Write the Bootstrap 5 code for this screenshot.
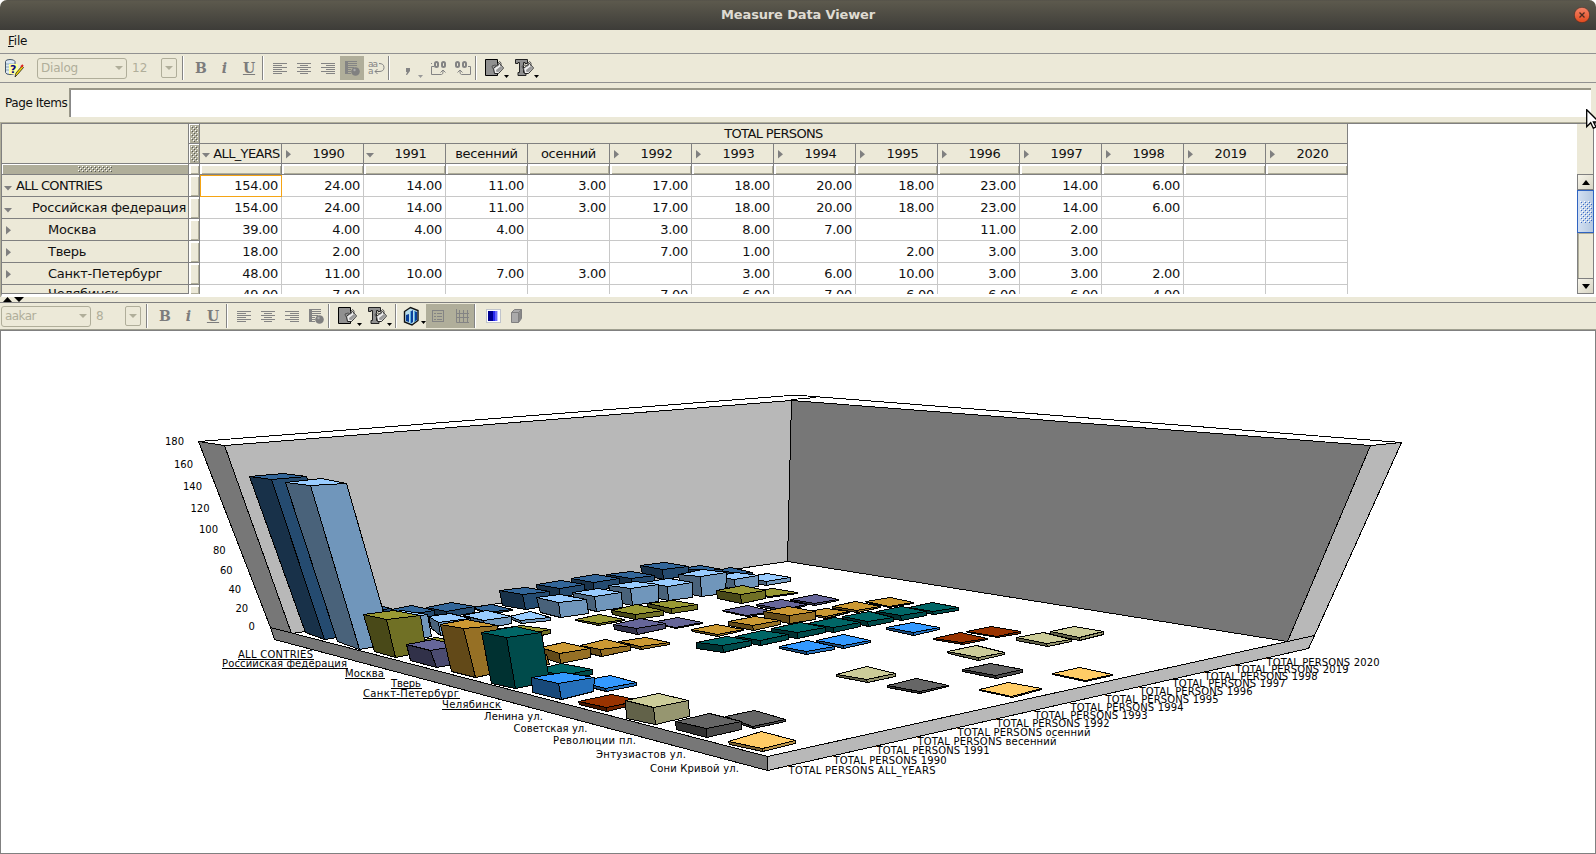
<!DOCTYPE html>
<html lang="en">
<head>
<meta charset="utf-8">
<title>Measure Data Viewer</title>
<link href="https://cdn.jsdelivr.net/npm/bootstrap@5.3.0/dist/css/bootstrap.min.css" rel="stylesheet">
<style>
:root{--face:#ece9d8;--shade:#b0ae9a;--line:#808080}
html,body{height:100%;overflow:hidden}
body{font:12px/1 "DejaVu Sans",sans-serif;color:#111;background:#fff}
.window{width:1596px;height:854px;background:var(--face);border-radius:7px 7px 0 0;overflow:hidden}
.titlebar{height:30px;background:linear-gradient(#55524a 0,#5c594d 5%,#3d3c38 100%);color:#dfdbd2;font-weight:700;font-size:13px;letter-spacing:-.15px;padding-bottom:1px}
.close-btn{right:6px;top:7px;width:16px;height:16px}
.menu{height:24px;border-bottom:1px solid #919191;padding:0 0 2px 8px;letter-spacing:-.2px}
.tools{display:grid;align-items:center;color:#7c7c7c}
.tools-a{height:29px;border-bottom:1px solid #919191;grid-template-columns:37px 90px 34px 16px 12px 24px 23px 26px 2px 28px 24px 24px 24px 24px 2px 37px 24px 24px 2px 34px 30px}
.tools-b{height:28px;border-top:1px solid var(--line);border-bottom:1px solid #a0a090;padding-left:1px;grid-template-columns:90px 34px 16px 12px 24px 23px 26px 2px 28px 24px 24px 24px 2px 34px 30px 4px 28px 24px 24px 2px 29px 24px}
.tools>*{display:flex;justify-content:flex-end;align-items:center;height:24px}
.tools svg{display:block;flex:none}
.tools .sep{width:2px;background:linear-gradient(90deg,#848484 50%,#fff 50%);justify-self:center}
.tools .combo{height:21px;border:1px solid var(--shade);border-radius:3px;color:var(--shade);justify-content:space-between;padding:0 3px 0 3px;letter-spacing:-.2px}
.tools-b .combo{letter-spacing:-.6px}
.tools .sz{color:var(--shade);justify-content:flex-start;padding-left:5px}
.tools .drop{height:20px;border:1px solid var(--shade);border-radius:2px;justify-content:center}
.tools .on{background:var(--shade)}
.tools .ser{font:700 14px/24px "DejaVu Serif",serif;justify-content:center}
.page-items{height:39px;padding:5px 5px 0 5px;letter-spacing:-.42px;white-space:nowrap}
.page-label{width:64px;padding-top:9px}
.page-box{height:29px;border:solid;border-width:2px 0 0 1px;border-color:#999788 #fff #fff #999788;background:#fff;box-shadow:inset 1px 0 #888}
.grid-pane{height:175px;background:#fff;border-top:1px solid #b0ae9a;border-left:1px solid #b0ae9a}
.grid-wrap{height:174px;border-top:1px solid var(--line);border-left:1px solid var(--line);border-bottom:3px solid #fff}
.cube{display:grid;grid-template-columns:187px 11px repeat(14,82px);grid-template-rows:20px 20px 11px repeat(5,22px) 9px;height:170px;width:1346px;overflow:hidden;font-size:13px;letter-spacing:-.27px}
.cube>div{border-right:1px solid #c8c8c8;border-bottom:1px solid #c8c8c8;position:relative;white-space:nowrap;overflow:hidden;line-height:21px}
.cube>.h{background:var(--face);border-color:var(--line);text-align:center;line-height:19px}
.cube>.r{text-align:left;line-height:21px}
.cube>.caps{letter-spacing:-.65px}
.cube>.h svg{position:absolute}
.cube>.n{text-align:right;padding-right:3px}
.cube>.last{border-bottom:0;line-height:19px}
.cube>.r.last{border-bottom:1px solid var(--line);line-height:17px}
.cube>.sel{outline:1px solid #f5a414;outline-offset:-1px}
.cube>.raise{box-shadow:inset 2px 2px #fff,inset -1px -1px #b0ae9a}
.cube>.grip{background:#b0ae9a;box-shadow:inset 1px 1px #fff}
.vcol{width:17px;margin-right:2px;height:170px;background:var(--face);border-right:1px solid var(--line)}
.vtop{height:50px}
.sbtn{height:16px;border:1px solid var(--line);border-right:0;background:linear-gradient(135deg,#f6f4ea,#d8d5c4)}
.thumb{height:43px;border:1px solid #2f63c0;background:linear-gradient(90deg,#d3e0f2,#b5c8e0);margin-right:-1px}
.track{border-left:1px solid var(--line);box-shadow:inset 1px 1px #b0ae9a}
.splitter{height:5px}
.chart-pane{height:524px;background:#fff;border:1px solid var(--line);overflow:hidden}
.chart-pane text{font:10px "DejaVu Sans",sans-serif;fill:#000}
.pointer{left:1586px;top:109px}
</style>
</head>
<body>
<svg width="0" height="0" class="position-absolute">
  <defs>
    <pattern id="dots" width="4" height="4" patternUnits="userSpaceOnUse"><rect width="1" height="1" fill="#fff"/><rect x="2" y="2" width="1" height="1" fill="#fff"/><rect x="1" y="1" width="1" height="1" fill="#555"/><rect x="3" y="3" width="1" height="1" fill="#555"/></pattern>
    <pattern id="bdots" width="4" height="4" patternUnits="userSpaceOnUse"><rect width="1" height="1" fill="#fff"/><rect x="2" y="2" width="1" height="1" fill="#fff"/><rect x="1" y="1" width="1" height="1" fill="#3a6bc8"/><rect x="3" y="3" width="1" height="1" fill="#3a6bc8"/></pattern>
    <g id="al-l" fill="#848484"><path d="M5 7h14v1H5zM5 9h9v1H5zM5 11h14v1H5zM5 13h9v1H5zM5 15h14v1H5zM5 17h9v1H5z"/></g>
    <g id="al-c" fill="#848484"><path d="M5 7h14v1H5zM8 9h8v1H8zM5 11h14v1H5zM8 13h8v1H8zM5 15h14v1H5zM8 17h8v1H8z"/></g>
    <g id="al-r" fill="#848484"><path d="M5 7h14v1H5zM10 9h9v1h-9zM5 11h14v1H5zM10 13h9v1h-9zM5 15h14v1H5zM10 17h9v1h-9z"/></g>
    <g id="al-img"><path fill="#848484" d="M5 5h12v1H5zM5 7h12v1H5zM5 9h12v1H5zM5 11h9v1H5zM5 13h6v1H5zM5 15h6v1H5zM5 17h6v1H5zM5 5h3v13H5z"/><circle cx="15.500" cy="15.500" r="4.300" fill="#808080"/><circle cx="14.500" cy="14" r="1.200" fill="#aaa"/></g>
    <g id="bucket"><path d="M8.500 12.500l6-5 4 4.500-5 5.500h-4z" fill="#eee" stroke="#222"/><path d="M13 10V7q2-3 3 0v3M9 13q-2 0-2-3 3-2 6 0" fill="none" stroke="#555"/><path d="M11 14l5-4 1.500 2-4 4h-2z" fill="#999"/><path d="M19 19h5l-2.500 3z" fill="#000"/></g>
    <g id="fill"><path d="M.5 3.500h12v16H.5z" fill="#909090" stroke="#000"/><use href="#bucket"/></g>
    <g id="tfill"><path d="M.5 3.500h12v4h-2.500v-1H8.500v10H11v3H3v-3h1.500v-10H3v1H.5z" fill="#909090" stroke="#222"/><use href="#bucket"/></g>
  </defs>
</svg>
<div class="window d-flex flex-column">
  <header class="titlebar position-relative d-flex align-items-center justify-content-center flex-shrink-0">Measure Data Viewer
    <svg class="close-btn position-absolute" viewBox="0 0 16 16"><defs><linearGradient id="cg" x2="0" y2="1"><stop stop-color="#f4856a"/><stop offset="1" stop-color="#e0491c"/></linearGradient></defs><circle cx="8" cy="8" r="7.700" fill="url(#cg)" stroke="#3c2a24" stroke-width=".6"/><path d="M5.500 5.500l5 5M10.500 5.500l-5 5" stroke="#4a2a20" stroke-width="1.300"/></svg>
  </header>
  <nav class="menu d-flex align-items-center flex-shrink-0"><span><u>F</u>ile</span></nav>

  <div class="tools tools-a flex-shrink-0">
    <div class="justify-content-start"><svg width="28" height="24"><path d="M5.500 5.500q0-2 4.500-2t5 2v11q-1 2-5 2t-4.500-2z" fill="#dce8f4" stroke="#456"/><path d="M6 8h8M6 11h8M6 14h8" stroke="#8ab"/><rect x="9" y="8" width="9" height="10" fill="#ffffa0"/><path d="M15 21l1-4 6-7 1.500 1.500-6 7z" fill="#f4d800" stroke="#222" stroke-width=".8"/><path d="M21 11l2-2" stroke="#d22" stroke-width="2"/><text x="10" y="17" font-size="11" font-weight="700" fill="#0a0a80">?</text></svg></div>
    <div class="combo"><span>Dialog</span><svg width="8" height="4"><path d="M0 0h8L4 4z" fill="#b0ae9a"/></svg></div>
    <div class="sz">12</div>
    <div class="drop"><svg width="8" height="4"><path d="M0 0h8L4 4z" fill="#b0ae9a"/></svg></div>
    <div class="sep"></div>
    <div class="ser">B</div><div class="ser fst-italic">i</div><div class="ser text-decoration-underline">U</div>
    <div class="sep"></div>
    <div><svg width="24" height="24"><use href="#al-l"/></svg></div>
    <div><svg width="24" height="24"><use href="#al-c"/></svg></div>
    <div><svg width="24" height="24"><use href="#al-r"/></svg></div>
    <div class="on"><svg width="24" height="24"><use href="#al-img"/></svg></div>
    <div><svg width="24" height="24" fill="none" stroke="#848484"><text x="4" y="11" font-size="9" fill="#848484" stroke="none" textLength="10">aa</text><text x="4" y="18" font-size="9" fill="#848484" stroke="none">a</text><path d="M15 7.500q5 0 5 4t-5 4h-4M13.500 13l-2.500 2.500 2.500 2.500"/></svg></div>
    <div class="sep"></div>
    <div><svg width="37" height="24"><path d="M16 12h4v3l-3 4h-1l1-3h-1z" fill="#848484"/><path d="M28 19h5l-2.500 3z" fill="#999"/></svg></div>
    <div><svg width="24" height="24" fill="none" stroke="#848484"><g stroke-width="2"><rect x="8" y="6" width="3" height="5" rx="1.500"/><rect x="15" y="6" width="3" height="5" rx="1.500"/></g><path d="M7 10.500H4.500v8h10q2 0 1.500-4M13.500 16.500l2.500-2.500 2.500 2.500M4 7.500h1"/></svg></div>
    <div><svg width="24" height="24" fill="none" stroke="#848484"><g stroke-width="2"><rect x="5" y="6" width="3" height="5" rx="1.500"/><rect x="12" y="6" width="3" height="5" rx="1.500"/></g><path d="M17 10.500h2.500v8h-9q-2 0-1.500-4M6.500 16.500L9 14l2.500 2.500"/></svg></div>
    <div class="sep"></div>
    <div><svg width="26" height="24"><use href="#fill"/></svg></div>
    <div><svg width="26" height="24"><use href="#tfill"/></svg></div>
  </div>

  <div class="page-items d-flex flex-shrink-0"><div class="page-label flex-shrink-0">Page Items</div><div class="page-box flex-grow-1"></div></div>

  <section class="grid-pane flex-shrink-0"><div class="grid-wrap d-flex">
    <div class="cube flex-shrink-0" id="cube"></div>
    <div class="flex-grow-1"></div>
    <div class="vcol d-flex flex-column">
      <div class="vtop"></div>
      <div class="sbtn d-flex align-items-center justify-content-center"><svg width="8" height="5"><path d="M0 5h8L4 0z"/></svg></div>
      <div class="thumb d-flex align-items-center justify-content-center"><svg width="12" height="22"><rect width="12" height="22" fill="url(#bdots)"/></svg></div>
      <div class="track flex-grow-1"></div>
      <div class="sbtn d-flex align-items-center justify-content-center"><svg width="8" height="5"><path d="M0 0h8L4 5z"/></svg></div>
    </div>
  </div></section>

  <div class="splitter flex-shrink-0"><svg class="d-block" width="30" height="5"><path d="M3 5h9L7.500 0zM14 0h10l-5 5z"/></svg></div>

  <div class="tools tools-b flex-shrink-0">
    <div class="combo"><span>aakar</span><svg width="8" height="4"><path d="M0 0h8L4 4z" fill="#b0ae9a"/></svg></div>
    <div class="sz">8</div>
    <div class="drop"><svg width="8" height="4"><path d="M0 0h8L4 4z" fill="#b0ae9a"/></svg></div>
    <div class="sep"></div>
    <div class="ser">B</div><div class="ser fst-italic">i</div><div class="ser text-decoration-underline">U</div>
    <div class="sep"></div>
    <div><svg width="24" height="24"><use href="#al-l"/></svg></div>
    <div><svg width="24" height="24"><use href="#al-c"/></svg></div>
    <div><svg width="24" height="24"><use href="#al-r"/></svg></div>
    <div><svg width="24" height="24"><use href="#al-img"/></svg></div>
    <div class="sep"></div>
    <div><svg width="26" height="24"><use href="#fill"/></svg></div>
    <div><svg width="26" height="24"><use href="#tfill"/></svg></div>
    <div class="sep"></div>
    <div><svg width="24" height="24"><path d="M2.500 7.500l6-4 7.500 3v10l-6 4.500-7.500-3z" fill="#b8dcea" stroke="#111" stroke-width="1.400"/><path d="M4 11l3-1v8l-3-1zM8 8l3-2v12l-3 2zM12 7l3 1v8l-3 2z" fill="#0a3f9a"/><path d="M8 8l1-.6v12l-1 .6zM12 7l1 .4v10l-1 .6z" fill="#5ab0e0"/><path d="M19 17h5l-2.500 3z" fill="#000"/></svg></div>
    <div class="on"><svg width="24" height="24" fill="none" stroke="#848484"><rect x="6.500" y="6.500" width="11" height="11"/><path d="M8 9.500h2M8 12.500h2M8 15.500h2M11 9.500h5M11 12.500h5M11 15.500h5"/></svg></div>
    <div class="on"><svg width="24" height="24" fill="none" stroke="#848484"><path d="M6.500 5v13.500H19M9.500 6v12M13.500 6v12M17.500 6v12M6 9.500h13M6 13.500h13"/></svg></div>
    <div class="sep"></div>
    <div><svg width="24" height="24"><rect x="5.500" y="5.500" width="14" height="13" fill="#fff" stroke="#c0c4cc"/><path d="M7 7h5v10H7z" fill="#000090"/><path d="M12 7h2v10h-2z" fill="#2a2af0"/><path d="M14 7h2v10h-2z" fill="#6a6af8"/><path d="M16 7h1v10h-1z" fill="#c0c0ff"/></svg></div>
    <div><svg width="24" height="24"><path d="M6.500 8.500l3-3h7v9l-3 4h-7z" fill="#aaa" stroke="#808080"/><path d="M6.500 8.500h7v10M13.500 8.500l3-3" fill="none" stroke="#808080"/><path d="M14 9l2-3v9l-2 3z" fill="#888"/></svg></div>
  </div>

  <main class="chart-pane flex-shrink-0"><svg id="chart" class="d-block" width="1594" height="522" viewBox="1 331 1594 522"></svg></main>
</div>
<svg class="pointer position-absolute" width="10" height="20" viewBox="0 0 10 20"><path d="M.7.7v17l4-4 2.600 5.500 2.700-1.200-2.600-5H13z" fill="#fff" stroke="#000" stroke-width="1.300"/></svg>

<script src="https://cdn.jsdelivr.net/npm/bootstrap@5.3.0/dist/js/bootstrap.bundle.min.js"></script>
<script>
/* ---- crosstab ---- */
const down = (x, y) => `<svg width="8" height="5" style="left:${x}px;top:${y}px"><path d="M0 0h8L4 4.500z" fill="#808080"/></svg>`;
const right = (x, y) => `<svg width="5" height="9" style="left:${x}px;top:${y}px"><path d="M0 0v8.500L5 4.200z" fill="#808080"/></svg>`;
const heads = ['v ALL_YEARS','> 1990','v 1991','  весенний','  осенний','> 1992','> 1993','> 1994','> 1995','> 1996','> 1997','> 1998','> 2019','> 2020'];
const rows = [
  ['v',14,'ALL CONTRIES',[154,24,14,11,3,17,18,20,18,23,14,6]],
  ['v',30,'Российская федерация',[154,24,14,11,3,17,18,20,18,23,14,6]],
  ['>',46,'Москва',[39,4,4,4,,3,8,7,,11,2]],
  ['>',46,'Тверь',[18,2,,,,7,1,,2,3,3]],
  ['>',46,'Санкт-Петербург',[48,11,10,7,3,,3,6,10,3,3,2]],
  ['',46,'Челябинск',[49,7,,,,7,6,7,6,6,6,4]]
];
let h = `<div class="h" style="grid-row:span 2"></div><div class="h grip"><svg width="7" height="16" style="left:2px;top:2px"><rect width="7" height="16" fill="url(#dots)"/></svg></div><div class="h caps" style="grid-column:span 14">TOTAL PERSONS</div>`;
h += `<div class="h grip"><svg width="7" height="16" style="left:2px;top:2px"><rect width="7" height="16" fill="url(#dots)"/></svg></div>`;
for (const t of heads) {
  const k = t[0];
  h += `<div class="h${t[2] === 'A' ? ' caps' : ''}" style="padding-left:${k === ' ' ? 0 : 12}px">${k === 'v' ? down(2, 9) : k === '>' ? right(4, 6) : ''}${t.slice(2)}</div>`;
}
h += `<div class="h grip"><svg width="34" height="6" style="left:76px;top:2px"><rect width="34" height="6" fill="url(#dots)"/></svg></div>` + '<div class="h raise"></div>'.repeat(15);
rows.forEach(([k, pad, name, vals], i) => {
  const last = i === 5 ? ' last' : '';
  h += `<div class="h r${last}${i ? '' : ' caps'}" style="padding-left:${pad}px">${k === 'v' ? down(2, 11) : k === '>' ? right(4, 7) : ''}${name}</div><div class="h raise${last}"></div>`;
  for (let c = 0; c < 14; c++) h += `<div class="n${last}${!i && !c ? ' sel' : ''}">${vals[c] ? vals[c].toFixed(2) : ''}</div>`;
});
document.getElementById('cube').innerHTML = h;

/* ---- 3D bar chart ---- */
const palette = ['#336699','#99ccff','#999933','#666699','#cc9933','#006666','#3399ff','#993300','#cccc99','#666666','#ffcc66'];
const tone = (c, f) => '#' + [1,3,5].map(i => Math.round(parseInt(c.substr(i, 2), 16) * f).toString(16).padStart(2, '0')).join('');
const poly = (p, fill) => `<polygon points="${p.map(q => q.join(',')).join(' ')}" fill="${fill}"/>`;
const P = (a, b) => [a, b];
let s = '<g stroke="#000" stroke-width="1" stroke-linejoin="round" shape-rendering="crispEdges">';
s += poly([P(198.5,441.5),P(790,395.5),P(801,395.500),P(1401.5,442.500),P(1370.5,445.500),P(791.5,400.500),P(224.5,445.500)], '#fff');
s += poly([P(224.5,445.5),P(791.5,400.5),P(787.5,561.5),P(291.5,633.5)], '#b8b8b8');
s += poly([P(791.5,400.5),P(1370.5,445.5),P(1287.5,641.5),P(787.5,561.5)], '#777777');
s += '<path d="M791.500 399.500L816 397.500" fill="none"/>';
s += poly([P(198.5,441.5),P(224.5,445.5),P(291.5,633.5),P(270.5,627.5)], '#777777');
s += poly([P(1370.5,445.5),P(1401.5,442.5),P(1314.5,635.5),P(1287.5,641.5)], '#b8b8b8');
s += poly([P(270.5,627.5),P(767.5,756.5),P(767.5,770.5),P(274.5,639.5)], '#777777');
s += poly([P(767.5,756.5),P(1314.5,635.5),P(1308.5,648.5),P(767.5,770.5)], '#b8b8b8');

/* origins of the five drawing sheets, three sheet units to a pixel */
const O = {a:[150,380], b:[350,540], c:[480,540], d:[680,540], e:[900,560]};
/* sheet, series, left, back, right, front of the top face, then a drop or the three lower corners (left, front, right) */
const bars = [
['d',0,113,90,150,82,217,96,180,101,8],
['d',0,5,85,62,76,127,88,75,92,20],
['c',0,481,76,552,67,624,79,548,88,487,103,550,118,624,105],
['c',0,380,103,455,94,523,105,453,116,25],
['c',0,275,115,345,103,418,115,340,127,27],
['c',0,170,133,243,122,313,134,237,146,25],
['c',0,59,151,137,141,207,153,127,164,68,195,135,208,212,197],
['b',0,370,202,425,194,486,207,410,217,5],
['b',0,230,201,305,188,372,200,290,213,18],
['b',0,125,208,185,197,252,210,175,222,22],
['b',0,0,205,70,192,123,204,40,215,30],
['a',0,299,290,400,280,470,290,364,299,467,757,522,779,622,762],
['d',1,190,112,262,101,331,113,258,124,13],
['c',1,700,108,768,96,835,106,762,117,705,135,765,147,834,138],
['c',1,594,103,667,87,739,98,660,110,605,158,665,169,736,159],
['c',1,490,128,565,114,638,127,562,138,505,170,565,180,638,172],
['c',1,386,135,465,123,535,134,452,146,398,183,457,196,536,184],
['c',1,277,158,355,144,424,158,343,170,290,200,348,213,426,201],
['c',1,169,173,242,163,320,177,236,187,180,217,240,232,324,219],
['b',1,478,229,540,214,600,233,512,242,8],
['b',1,340,226,410,212,483,229,400,241,350,250,405,264,485,249],
['b',1,235,229,300,220,362,236,265,247,243,265,272,285,370,275],
['b',1,75,225,155,210,232,223,140,238,100,285,165,305,245,289],
['a',1,406,307,513,295,588,309,480,317,562,785,628,807,728,789],
['d',2,200,158,278,146,352,158,268,168,4],
['d',2,109,151,187,137,257,150,182,162,113,176,183,190,255,176],
['c',2,503,191,578,180,653,192,573,204,17],
['c',2,395,210,470,193,549,211,465,222,16],
['c',2,286,237,358,222,434,237,355,251,5],
['b',2,430,268,515,255,602,268,515,285,13],
['b',2,190,305,255,293,330,305,240,315,9],
['b',2,39,223,130,210,210,226,108,237,72,335,137,351,230,335],
['d',3,331,177,405,163,476,178,402,190,5],
['d',3,230,193,303,178,380,192,310,208,6],
['d',3,128,211,203,196,280,213,200,226,4],
['c',3,515,246,592,231,667,248,585,262,2],
['c',3,401,252,482,236,557,250,470,266,17],
['b',3,170,314,250,298,330,315,240,331,182,362,260,383,345,366],
['d',4,557,185,630,172,700,186,628,198,4],
['d',4,456,199,525,184,600,198,530,210,6],
['d',4,360,216,438,204,507,213,435,228,6],
['d',4,250,215,325,200,406,213,328,227,254,235,328,250,406,237],
['d',4,145,245,222,228,300,242,218,257,13],
['d',4,35,269,110,253,190,267,112,283,6],
['b',4,805,305,885,291,959,306,872,320,8],
['b',4,690,315,765,299,842,315,751,328,694,334,753,348,842,332],
['b',4,570,322,640,308,720,326,628,341,576,352,630,369,722,352],
['b',4,440,345,510,330,588,343,500,360,450,375,505,392,598,372],
['b',4,270,252,350,237,443,255,340,266,303,393,375,411,460,395],
['d',5,686,202,757,187,835,202,758,215,9],
['d',5,588,215,665,200,740,213,662,226,14],
['d',5,488,230,568,215,640,232,563,245,14],
['d',5,382,249,463,233,540,247,460,261,15],
['d',5,275,266,360,248,435,262,352,277,18],
['d',5,165,288,248,270,326,284,240,300,15],
['d',5,49,307,138,288,215,300,128,317,19],
['b',5,560,387,635,371,727,388,640,405,17],
['b',5,393,276,496,260,575,277,470,293,425,430,497,445,598,425],
['d',6,618,261,698,248,778,261,700,278,8],
['d',6,410,300,490,284,572,300,490,316,9],
['d',6,298,318,383,302,463,320,378,335,8],
['b',6,685,425,780,407,860,426,767,444,10],
['b',6,543,411,640,396,733,413,624,431,547,458,635,478,730,455],
['e',7,200,213,275,200,361,215,290,228,5],
['e',7,100,234,180,217,263,234,185,247,5],
['c',7,296,485,393,464,480,482,378,503,11],
['e',8,450,215,522,200,610,215,537,232,9],
['e',8,349,233,430,218,513,237,440,250,9],
['e',8,143,273,228,257,314,276,235,292,9],
['d',8,469,402,560,379,647,400,560,418,9],
['c',8,435,482,535,461,626,480,520,503,440,535,527,553,628,530],
['e',9,187,328,272,310,368,329,287,347,8],
['d',9,622,436,710,415,805,435,717,454,6],
['c',9,735,530,822,511,916,537,818,558,8],
['c',9,587,543,687,520,783,543,680,565,590,567,680,591,785,568],
['e',10,457,341,538,322,637,342,555,360,4],
['e',10,238,388,325,368,425,386,335,408,4],
['c',10,746,603,845,574,946,601,846,624,10]
];
for (const [o, k, ...v] of bars) {
  const q = [];
  for (let i = 0; i < 8; i += 2) q.push([v[i], v[i+1]]);
  const [L, B, R, F] = q;
  let l, f, r;
  if (v.length === 9) { const d = v[8]; l = [L[0]+1, L[1]+d*.9]; f = [F[0]+1, F[1]+d]; r = [R[0], R[1]+d*.9]; }
  else { l = [v[8], v[9]]; f = [v[10], v[11]]; r = [v[12], v[13]]; }
  const m = pts => pts.map(p => [(Math.floor(O[o][0] + p[0]/3) + .5), (Math.floor(O[o][1] + p[1]/3) + .5)]);
  const c = palette[k];
  s += poly(m([L, F, f, l]), tone(c, .48)) + poly(m([F, R, r, f]), tone(c, .735)) + poly(m([L, B, R, F]), c);
}
s += '</g>';

const label = (t, x, y, w, u) => `<text x="${x}" y="${y}"${w ? ` textLength="${w}"` : ''}>${t}</text>` + (u ? `<path d="M${x-.5} ${y+1.500}h${w+1}" stroke="#000" shape-rendering="crispEdges"/>` : '');
[[180,165,445],[160,174,468],[140,183,490],[120,190.500,512],[100,199,533],[80,213,554],[60,220,574],[40,228.500,593],[20,235.500,612],[0,248.500,630]].forEach(a => s += label(...a));
[['ALL CONTRIES',238,658,75,1],['Российская федерация',222,667,125,1],['Москва',345,677,39,1],['Тверь',391,687,30,1],['Санкт-Петербург',363,697,96,1],['Челябинск',442,708,59,1],['Ленина ул.',484,720,59],['Советская ул.',513.500,732,74],['Революции пл.',553,744,83],['Энтузиастов ул.',596,758,90],['Сони Кривой ул.',650,772,89]].forEach(a => s += label(...a));
[['ALL_YEARS',789,774,147],['1990',834,764],['1991',877,754],['весенний',918,745,139],['осенний',958,736,133],['1992',997,727],['1993',1035,719],['1994',1071,711],['1995',1106,703],['1996',1140,695],['1997',1173,687],['1998',1205,680],['2019',1236,673],['2020',1267,666]].forEach(([t, x, y, w]) => s += label('TOTAL PERSONS ' + t, x - .5, y, w || 113));
document.getElementById('chart').innerHTML = s;
</script>
</body>
</html>
